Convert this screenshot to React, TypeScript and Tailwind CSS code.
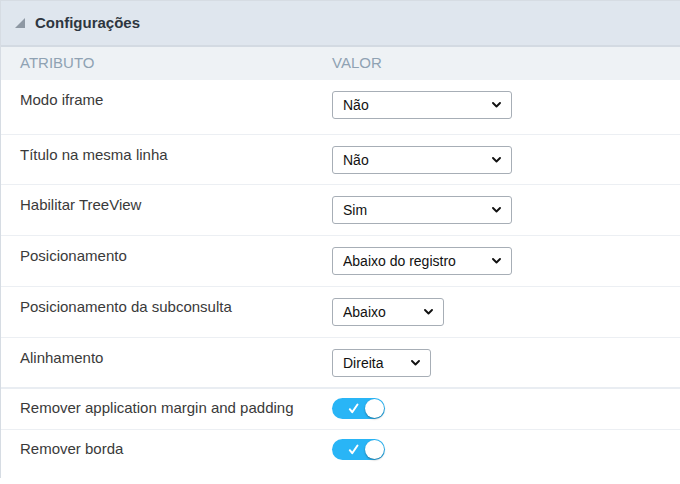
import React from "react";

const FONT = { fontFamily: '"Liberation Sans", Arial, sans-serif' };

function Chevron() {
  return (
    <svg
      className="pointer-events-none absolute right-[11px] top-1/2 -translate-y-1/2"
      width="9"
      height="6"
      viewBox="0 0 9 6"
    >
      <path d="M1 1 L4.5 4.5 L8 1" fill="none" stroke="#111" strokeWidth="1.9" strokeLinecap="round" strokeLinejoin="round" />
    </svg>
  );
}

function Select({ value, width }: { value: string; width: string }) {
  return (
    <div className={`relative ${width} h-[28px]`}>
      <select
        defaultValue={value}
        className="h-full w-full appearance-none rounded-[3px] border border-[#a7aeb6] bg-white pl-[10px] text-[14px] text-[#111] outline-none"
        style={FONT}
      >
        <option>{value}</option>
      </select>
      <Chevron />
    </div>
  );
}

function Switch() {
  return (
    <div className="relative h-[21px] w-[53px] rounded-full bg-[#29b5f6]">
      <svg className="absolute left-[16px] top-[5px]" width="11" height="11" viewBox="0 0 11 11">
        <path d="M1.8 6.2 L4.2 9.2 L9.5 1.5" fill="none" stroke="white" strokeWidth="2" strokeLinecap="round" strokeLinejoin="round" />
      </svg>
      <div className="absolute right-[1px] top-[1px] h-[19px] w-[19px] rounded-full bg-white shadow-[0_1px_2px_rgba(0,0,0,0.35)]" />
    </div>
  );
}

type Row = { label: string; value?: string; width?: string; h: string; sw?: boolean; border: string };

const rows: Row[] = [
  { label: "Modo iframe", value: "Não", width: "w-[180px]", h: "h-[55px]", border: "border-b border-[#eceff3]" },
  { label: "Título na mesma linha", value: "Não", width: "w-[180px]", h: "h-[50px]", border: "border-b border-[#eceff3]" },
  { label: "Habilitar TreeView", value: "Sim", width: "w-[180px]", h: "h-[51px]", border: "border-b border-[#eceff3]" },
  { label: "Posicionamento", value: "Abaixo do registro", width: "w-[180px]", h: "h-[51px]", border: "border-b border-[#eceff3]" },
  { label: "Posicionamento da subconsulta", value: "Abaixo", width: "w-[112px]", h: "h-[51px]", border: "border-b border-[#eceff3]" },
  { label: "Alinhamento", value: "Direita", width: "w-[99px]", h: "h-[51px]", border: "border-b-2 border-[#e9edf2]" },
  { label: "Remover application margin and padding", sw: true, h: "h-[41px]", border: "border-b border-[#eceff3]" },
  { label: "Remover borda", sw: true, h: "h-[41px]", border: "" },
];

export default function App() {
  return (
    <div className="h-[484px] w-[680px] overflow-hidden bg-white" style={FONT}>
      <div className="h-[478px] border-l border-t border-[#d6dce3]">
        <div className="flex h-[46px] items-center border-b-2 border-[#d3dae2] bg-[#dfe6ee]">
          <svg className="ml-[14px] mr-[9px]" width="11" height="10" viewBox="0 0 11 10">
            <polygon points="10,0 10,10 0,10" fill="#8e98a3" />
          </svg>
          <span className="text-[15px] font-bold text-[#2e3640]">Configurações</span>
        </div>
        <div className="flex h-[33px] items-center bg-[#eef2f5] text-[15px] uppercase text-[#8fa2b3]">
          <div className="w-[331px] pl-[19px]">Atributo</div>
          <div>Valor</div>
        </div>
        {rows.map((r) => (
          <div key={r.label} className={`flex ${r.h} ${r.border}`}>
            <div className={`w-[331px] pl-[19px] text-[15px] leading-[17px] text-[#3a3a3a] ${r.sw ? "pt-[10px]" : "pt-[11px]"}`}>
              {r.label}
            </div>
            <div className={r.sw ? "pt-[9px]" : "pt-[11px]"}>
              {r.sw ? <Switch /> : <Select value={r.value!} width={r.width!} />}
            </div>
          </div>
        ))}
      </div>
    </div>
  );
}
